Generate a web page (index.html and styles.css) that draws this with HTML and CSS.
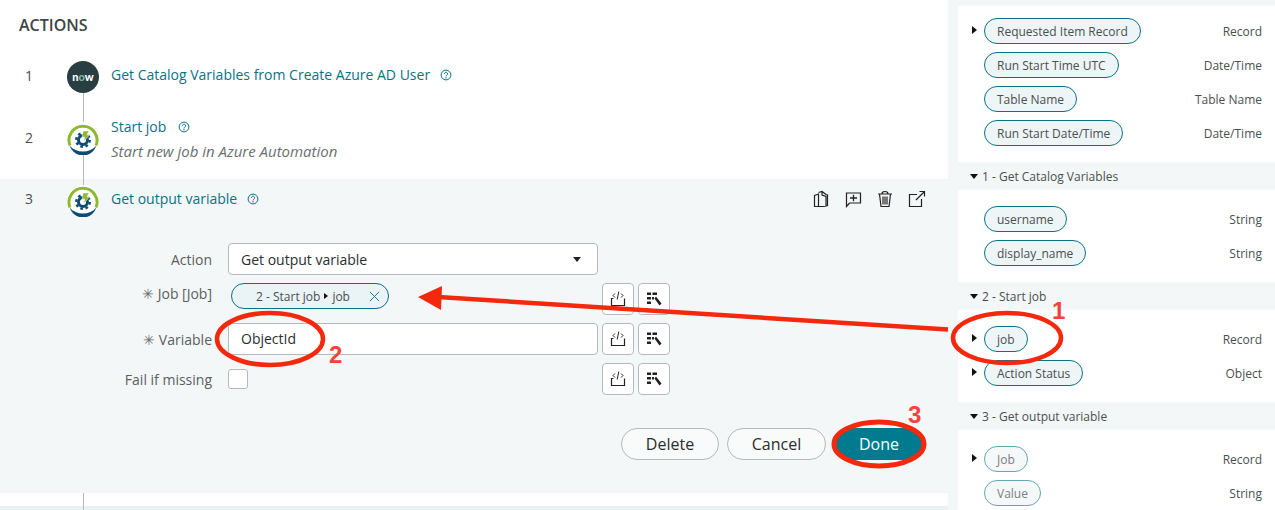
FILE: index.html
```html
<!DOCTYPE html>
<html lang="en">
<head>
    <meta charset="UTF-8">
    <title>Actions</title>
    <link rel="stylesheet" href="styles.css">
</head>
<body>
    <svg width="0" height="0" class="defs">
        <symbol id="spoke" viewBox="0 0 32 32">
            <circle cx="16" cy="16" r="16" fill="#fff"/>
            <path d="M3 22.500A14 14 0 1 1 29 22.500" fill="none" stroke="#8db92e" stroke-width="3"/>
            <path d="M2.500 22.500C5 29 10 32.500 16 32.500S27 29 29.500 22.500C26 26.500 21 28.500 16 28.500S6 26.500 2.500 22.500Z" fill="#0f4c75"/>
            <circle cx="16" cy="17" r="4.500" fill="none" stroke="#0f4c75" stroke-width="3"/>
            <circle cx="16" cy="17" r="6.800" fill="none" stroke="#0f4c75" stroke-width="2.400" stroke-dasharray="2.700 2.640"/>
            <path d="M16 8h6l-2 3.800h2.500l-5.800 7 1-4.800h-2.500Z" fill="#8db92e" stroke="#fff" stroke-width=".5"/>
        </symbol>
        <symbol id="help" viewBox="0 0 12 12">
            <circle cx="6" cy="6" r="4.900" fill="none" stroke="currentColor"/>
            <path d="M4.400 4.800A1.600 1.600 0 1 1 6.800 6.200C6.200 6.500 6 6.800 6 7.400" fill="none" stroke="currentColor"/>
            <circle cx="6" cy="8.800" r=".7" fill="currentColor"/>
        </symbol>
        <symbol id="script" viewBox="0 0 16 16">
            <path d="M3.500 7.500H1.500V14.500H14.500V7.500" fill="none" stroke="#222" stroke-width="1.200"/>
            <path d="M5 2.500 3 4.500 5 6.500M8.800 .5 7.200 8.500M11 2.500 13 4.500 11 6.500" fill="none" stroke="#222"/>
        </symbol>
        <symbol id="wand" viewBox="0 0 16 16">
            <path d="M1 1.500h4v2.500H1ZM6.500 1.500H11v2.500H6.500ZM1 6h4v2.500H1ZM6 6h2v2.500H6ZM1 10.500h4v2.500H1Z" fill="#222"/>
            <path d="M8.500 7.500 10 5.500 15.500 12.500 13.500 14.500Z" fill="#222"/>
        </symbol>
    </svg>

    <div class="app">
        <main class="actions">
            <h2 class="actions-title">ACTIONS</h2>

            <div class="step step-one">
                <span class="step-num">1</span>
                <span class="now-logo">n<b>o</b>w</span>
                <a class="step-name">Get Catalog Variables from Create Azure AD User</a>
                <svg class="help"><use href="#help"/></svg>
            </div>

            <div class="step step-two">
                <span class="step-num">2</span>
                <svg class="spoke-logo"><use href="#spoke"/></svg>
                <div class="step-text">
                    <div class="step-line">
                        <a class="step-name">Start job</a>
                        <svg class="help"><use href="#help"/></svg>
                    </div>
                    <p class="step-desc">Start new job in Azure Automation</p>
                </div>
            </div>

            <section class="step-open">
                <div class="step step-three">
                    <span class="step-num">3</span>
                    <svg class="spoke-logo"><use href="#spoke"/></svg>
                    <a class="step-name">Get output variable</a>
                    <svg class="help"><use href="#help"/></svg>
                    <div class="step-tools">
                        <svg viewBox="0 0 16 18" class="tool">
                            <path d="M1.500 5.500 5.500 4V16.500H1.500ZM5.500 2.500 9 1.500 13 4.500 14.500 5V15.500L11 16.500H5.500M9 1.500V5L13 6.500V16" fill="none" stroke="#222" stroke-width="1.200"/>
                        </svg>
                        <svg viewBox="0 0 18 18" class="tool">
                            <path d="M2.500 3H16.500V13H5.500L2.500 16.500Z" fill="none" stroke="#222" stroke-width="1.200"/>
                            <path d="M6 8H13M9.500 4.800V11.200" fill="none" stroke="#222" stroke-width="1.300"/>
                        </svg>
                        <svg viewBox="0 0 16 18" class="tool">
                            <path d="M1 4H15M5 4C5 2 6 1.500 8 1.500S11 2 11 4M2.500 4 4 16.500H12L13.500 4M6 6.500V14.500M8 6.500V14.500M10 6.500V14.500" fill="none" stroke="#222" stroke-width="1.200"/>
                        </svg>
                        <svg viewBox="0 0 18 18" class="tool">
                            <path d="M9 4.500H1.500V16.500H13.500V9M8 10 16.500 1.500M11.500 1.500H16.500V6.500" fill="none" stroke="#222" stroke-width="1.200"/>
                        </svg>
                    </div>
                </div>

                <form class="step-form">
                    <label class="form-label">Action</label>
                    <div class="select-box">Get output variable<span class="select-caret"></span></div>

                    <label class="form-label label-high"><span class="req">✳</span> Job [Job]</label>
                    <div class="job-field">
                        <span class="job-pill">2 - Start job <i class="caret-right small"></i> job
                            <svg viewBox="0 0 12 12" class="pill-close"><path d="M1 1 11 11M11 1 1 11" stroke="#0b7285" fill="none"/></svg>
                        </span>
                    </div>
                    <button type="button" class="square-btn"><svg><use href="#script"/></svg></button>
                    <button type="button" class="square-btn"><svg><use href="#wand"/></svg></button>

                    <label class="form-label"><span class="req">✳</span> Variable</label>
                    <div class="text-box">ObjectId</div>
                    <button type="button" class="square-btn"><svg><use href="#script"/></svg></button>
                    <button type="button" class="square-btn"><svg><use href="#wand"/></svg></button>

                    <label class="form-label">Fail if missing</label>
                    <div class="check-field"><span class="check-box"></span></div>
                    <button type="button" class="square-btn"><svg><use href="#script"/></svg></button>
                    <button type="button" class="square-btn"><svg><use href="#wand"/></svg></button>
                </form>

                <div class="form-actions">
                    <button type="button" class="round-btn round-delete">Delete</button>
                    <button type="button" class="round-btn">Cancel</button>
                    <button type="button" class="round-btn round-primary">Done</button>
                </div>
            </section>

            <div class="step-tail"></div>
        </main>

        <aside class="data-panel">
            <div class="panel-strip"></div>
            <div class="data-rows first-rows">
                <div class="data-row"><i class="caret-right"></i><span class="data-pill">Requested Item Record</span><span class="data-type">Record</span></div>
                <div class="data-row"><span class="data-pill">Run Start Time UTC</span><span class="data-type">Date/Time</span></div>
                <div class="data-row"><span class="data-pill">Table Name</span><span class="data-type">Table Name</span></div>
                <div class="data-row"><span class="data-pill">Run Start Date/Time</span><span class="data-type">Date/Time</span></div>
            </div>

            <h3 class="panel-head"><i class="caret-down"></i>1 - Get Catalog Variables</h3>
            <div class="data-rows">
                <div class="data-row"><span class="data-pill">username</span><span class="data-type">String</span></div>
                <div class="data-row"><span class="data-pill">display_name</span><span class="data-type">String</span></div>
            </div>

            <h3 class="panel-head"><i class="caret-down"></i>2 - Start job</h3>
            <div class="data-rows">
                <div class="data-row"><i class="caret-right"></i><span class="data-pill">job</span><span class="data-type">Record</span></div>
                <div class="data-row"><i class="caret-right"></i><span class="data-pill">Action Status</span><span class="data-type">Object</span></div>
            </div>

            <h3 class="panel-head"><i class="caret-down"></i>3 - Get output variable</h3>
            <div class="data-rows">
                <div class="data-row"><i class="caret-right"></i><span class="data-pill pill-pale">Job</span><span class="data-type">Record</span></div>
                <div class="data-row"><span class="data-pill pill-pale">Value</span><span class="data-type">String</span></div>
            </div>
        </aside>
    </div>

    <!-- red markup drawn over the screenshot -->
    <svg class="markup" viewBox="0 0 1275 510">
        <g fill="none" stroke="#f4280c">
            <path d="M948 329.500 438 297" stroke-width="4.500"/>
            <ellipse cx="1007" cy="338" rx="54" ry="25" stroke-width="4.500"/>
            <ellipse cx="270" cy="339" rx="53" ry="26" stroke-width="4.500"/>
            <ellipse cx="879" cy="444" rx="45" ry="22" stroke-width="5"/>
        </g>
        <path d="M418 297 442 286 441 310Z" fill="#f4280c"/>
        <g class="markup-num">
            <text x="1052" y="319">1</text>
            <text x="329" y="363">2</text>
            <text x="908" y="423">3</text>
        </g>
    </svg>
</body>
</html>
```

FILE: styles.css
```css
/* General */
body {
    margin: 0;
    width: 1275px;
    height: 510px;
    overflow: hidden;
    position: relative;
    background-color: #fff;
    color: #4a4f50;
    font-family: "Open Sans", sans-serif;
    font-size: 14px;
}

.defs {
    position: absolute;
}

.app {
    display: grid;
    grid-template-columns: 948px 327px;
    height: 510px;
}

/* Actions column */
.actions {
    display: flex;
    flex-direction: column;
    height: 510px;
    overflow: hidden;
}

.actions-title {
    margin: 0;
    padding: 16px 19px 0;
    height: 61px;
    box-sizing: border-box;
    font-size: 16px;
    line-height: 19px;
    font-weight: 600;
    color: #3f4445;
}

.step {
    position: relative;
    display: flex;
    align-items: center;
    padding-left: 25px;
}

.step-num {
    width: 42px;
    flex: none;
    margin-bottom: 3px;
    font-size: 14px;
}

.step-one {
    height: 31px;
}

.step-two {
    margin-top: 30px;
    height: 33px;
}

.step-name {
    color: #0b7285;
    font-size: 14px;
}

.step-one .step-name,
.step-three .step-name {
    margin-left: 12px;
    margin-bottom: 5px;
}

.step-three .step-num,
.step-three .help {
    margin-bottom: 5px;
}

.now-logo {
    width: 32px;
    height: 32px;
    flex: none;
    border-radius: 50%;
    background-color: #293e40;
    color: #fff;
    font-family: Lato, sans-serif;
    font-size: 11px;
    font-weight: 900;
    line-height: 32px;
    text-align: center;
    position: relative;
    z-index: 1;
}

.now-logo b {
    color: #81b5a1;
}

.spoke-logo {
    width: 32px;
    height: 32px;
    flex: none;
    position: relative;
    z-index: 1;
}

.help {
    width: 12px;
    height: 12px;
    margin-left: 10px;
    margin-bottom: 3px;
    color: #0b7285;
    flex: none;
}

.step-text {
    margin-left: 12px;
}

.step-line {
    display: flex;
    align-items: center;
    height: 20px;
}

.step-line .help {
    margin-bottom: 0;
    margin-left: 12px;
}

.step-desc {
    margin: 4px 0 0;
    font-size: 15px;
    line-height: 20px;
    font-style: italic;
    color: #6b6f70;
}

/* timeline line */
.step-one::before,
.step-two::before,
.step-tail::before {
    content: "";
    position: absolute;
    left: 83px;
    width: 1px;
    background-color: #b5b9ba;
}

.step-one::before {
    top: 31px;
    height: 30px;
}

.step-two::before {
    top: 33px;
    height: 30px;
}

/* Open step */
.step-open {
    margin-top: 24px;
    height: 314px;
    background-color: #f4f7f7;
}

.step-three {
    padding-top: 6px;
    height: 32px;
}

.step-tools {
    margin-left: auto;
    margin-right: 22px;
    display: flex;
    gap: 14px;
    align-items: center;
    position: relative;
    top: -2px;
}

.tool {
    width: 18px;
    height: 18px;
}

.step-form {
    margin-top: 26px;
    display: grid;
    grid-template-columns: 212px 386px 36px 36px;
    grid-auto-rows: 32px;
    row-gap: 8px;
    align-items: center;
}

.form-label {
    grid-column: 1;
    text-align: right;
    color: #5a5f60;
    font-size: 14px;
}

.label-high {
    position: relative;
    top: -6px;
}

.req {
    font-size: 14px;
    color: #6b6f70;
}

.select-box,
.text-box {
    height: 32px;
    box-sizing: border-box;
    margin-left: 16px;
    padding: 0 12px;
    border: 1px solid #b5b9ba;
    border-radius: 4px;
    background-color: #fff;
    color: #2b2e2f;
    font-size: 14px;
    line-height: 29px;
}

.select-box {
    display: flex;
    justify-content: space-between;
    align-items: center;
}

.select-caret {
    width: 0;
    height: 0;
    margin-right: 4px;
    border-left: 4.500px solid transparent;
    border-right: 4.500px solid transparent;
    border-top: 5px solid #222;
}

.job-field {
    margin-left: 19px;
    display: flex;
}

.job-pill {
    display: inline-flex;
    align-items: center;
    gap: 4px;
    width: 158px;
    height: 26px;
    box-sizing: border-box;
    padding-left: 24px;
    border: 1px solid #0b7285;
    border-radius: 13px;
    background-color: #eaf3f5;
    color: #4a4f50;
    font-size: 12px;
    position: relative;
    top: -3px;
}

.pill-close {
    position: absolute;
    right: 8px;
    top: 7px;
    width: 11px;
    height: 11px;
}

.check-field {
    margin-left: 16px;
}

.check-box {
    display: block;
    width: 20px;
    height: 20px;
    box-sizing: border-box;
    border: 1px solid #b5b9ba;
    border-radius: 3px;
    background-color: #fff;
}

.square-btn {
    width: 32px;
    height: 32px;
    padding: 7px;
    margin-left: 4px;
    border: 1px solid #b5b9ba;
    border-radius: 4px;
    background-color: #fff;
}

.square-btn svg {
    display: block;
    width: 16px;
    height: 16px;
}

.form-actions {
    margin-top: 33px;
    padding-right: 23px;
    display: flex;
    justify-content: flex-end;
    gap: 7px;
}

.round-btn {
    width: 99px;
    height: 32px;
    border: 1px solid #b5b9ba;
    border-radius: 16px;
    background-color: #f9fafa;
    color: #2b2e2f;
    font-family: "Open Sans", sans-serif;
    font-size: 16px;
}

.round-delete {
    width: 98px;
    margin-right: 1px;
}

.round-primary {
    width: 92px;
    border-color: #007a8f;
    background-color: #007a8f;
    color: #fff;
}

.step-tail {
    position: relative;
    flex: 1;
    background: linear-gradient(#fff 13px, #e9f1f3 13px);
}

.step-tail::before {
    top: 0;
    bottom: 0;
}

/* Data panel */
.data-panel {
    border-left: 10px solid #f4f7f7;
    height: 510px;
    overflow: hidden;
}

.panel-strip {
    height: 6px;
    background-color: #f4f7f7;
}

.panel-head {
    margin: 0;
    height: 28px;
    padding-left: 12px;
    display: flex;
    align-items: center;
    gap: 4px;
    background-color: #f4f7f7;
    color: #4a4f50;
    font-size: 12px;
    font-weight: 400;
}

.data-rows {
    padding: 16px 13px 16px 14px;
    display: flex;
    flex-direction: column;
    gap: 8px;
}

.first-rows {
    padding-top: 12px;
}

.data-row {
    position: relative;
    display: flex;
    justify-content: space-between;
    align-items: center;
    height: 26px;
    padding-left: 12px;
}

.data-pill {
    height: 26px;
    box-sizing: border-box;
    padding: 0 12px;
    border: 1px solid #0b7285;
    border-radius: 13px;
    background-color: #eef5f7;
    font-size: 12px;
    line-height: 25px;
}

.pill-pale {
    border-color: #6aa6b2;
    background-color: #f4f8f9;
    color: #7b7f80;
}

.data-type {
    font-size: 12px;
}

.caret-right {
    display: inline-block;
    width: 0;
    height: 0;
    border-top: 4.500px solid transparent;
    border-bottom: 4.500px solid transparent;
    border-left: 5px solid #111;
}

.data-row .caret-right {
    position: absolute;
    left: 0;
    top: 8px;
}

.caret-right.small {
    border-top-width: 3.500px;
    border-bottom-width: 3.500px;
    border-left-width: 4px;
}

.caret-down {
    display: inline-block;
    width: 0;
    height: 0;
    border-left: 4.500px solid transparent;
    border-right: 4.500px solid transparent;
    border-top: 5px solid #111;
}

/* Red markup */
.markup {
    position: absolute;
    left: 0;
    top: 0;
    width: 1275px;
    height: 510px;
    pointer-events: none;
}

.markup-num {
    font-family: "Liberation Sans", sans-serif;
    font-size: 24px;
    font-weight: 700;
    fill: #f0453a;
}
```
